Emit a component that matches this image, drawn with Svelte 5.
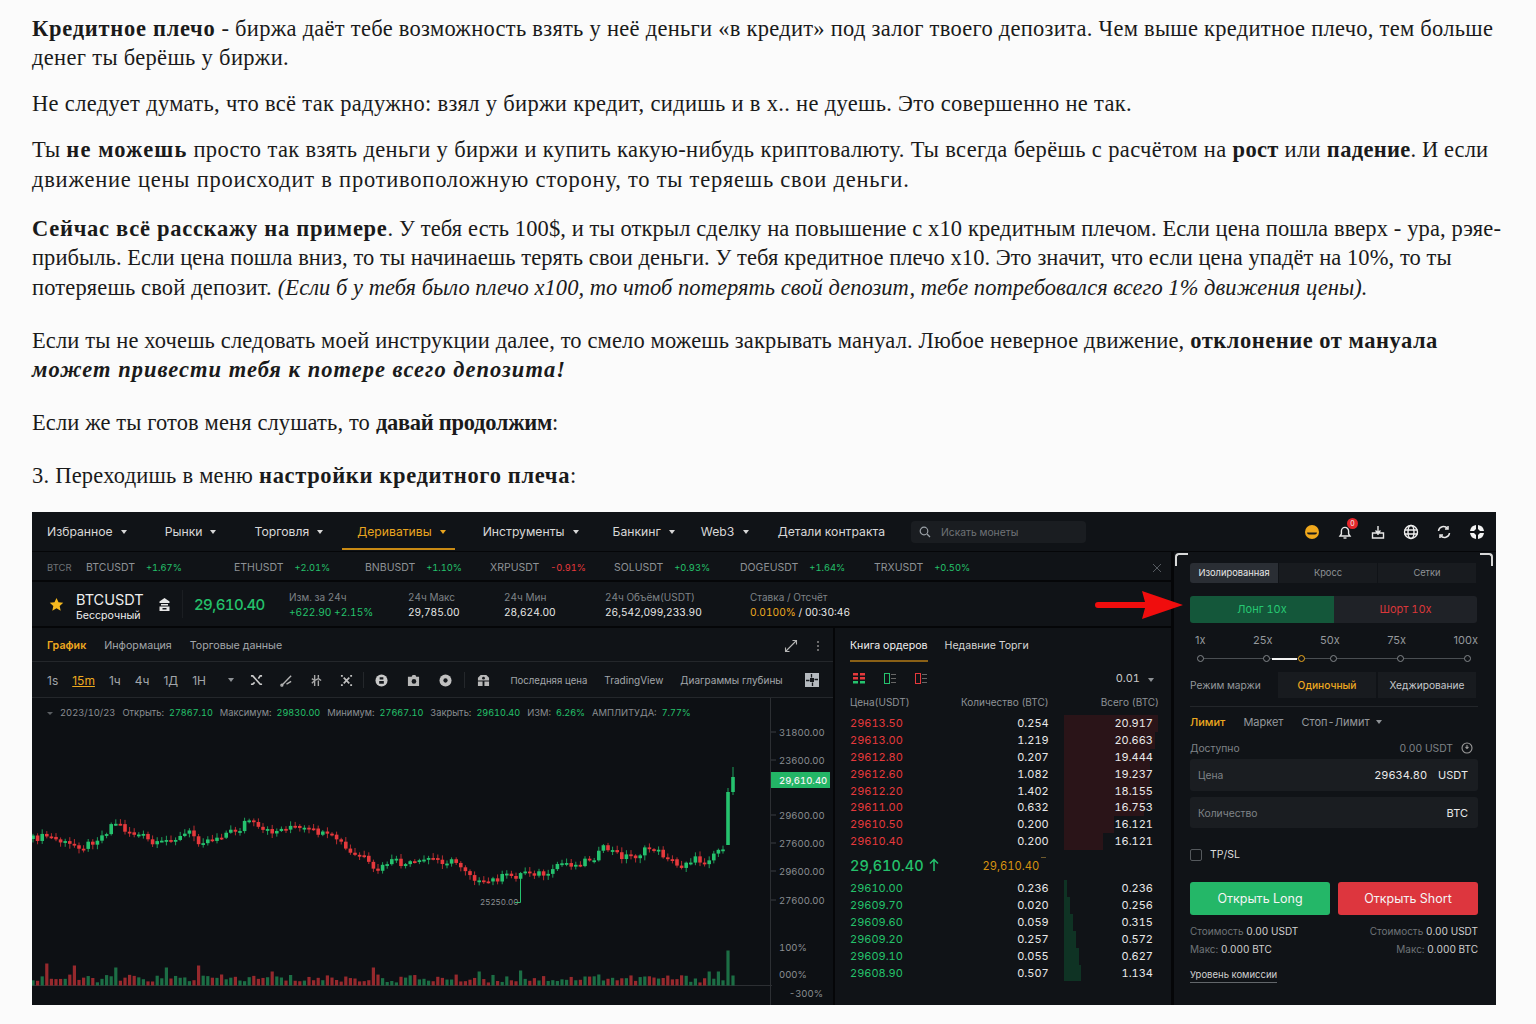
<script>
  const tickers = [
    ['BTCUSDT', '+1.67%'], ['ETHUSDT', '+2.01%'], ['BNBUSDT', '+1.10%'], ['XRPUSDT', '-0.91%'],
    ['SOLUSDT', '+0.93%'], ['DOGEUSDT', '+1.64%'], ['TRXUSDT', '+0.50%']
  ];
  const navItems = [
    ['Избранное', true], ['Рынки', true], ['Торговля', true], ['Деривативы', true],
    ['Инструменты', true], ['Банкинг', true], ['Web3', true], ['Детали контракта', false]
  ];
  const asks = [
    ['29613.50', '0.254', '20.917', 94], ['29613.00', '1.219', '20.663', 91], ['29612.80', '0.207', '19.444', 86],
    ['29612.60', '1.082', '19.237', 86], ['29612.20', '1.402', '18.155', 86], ['29611.00', '0.632', '16.753', 80],
    ['29610.50', '0.200', '16.121', 50], ['29610.40', '0.200', '16.121', 39]
  ];
  const bids = [
    ['29610.00', '0.236', '0.236', 3], ['29609.70', '0.020', '0.256', 6], ['29609.60', '0.059', '0.315', 9],
    ['29609.20', '0.257', '0.572', 12], ['29609.10', '0.055', '0.627', 15], ['29608.90', '0.507', '1.134', 17]
  ];

  // price path traced by hand: [x, y] in page pixels
  const path = [
    [33,840],[47,837],[69,846],[78,846],[83,848],[105,835],[110,826],[118,823],[123,830],[132,834],[145,838],
    [151,845],[156,846],[165,843],[170,838],[178,840],[188,833],[193,835],[197,842],[213,840],[223,835],[240,830],
    [247,820],[252,823],[257,830],[265,833],[275,832],[284,830],[288,826],[298,830],[317,833],[325,837],[338,840],
    [343,847],[348,853],[353,857],[362,856],[367,863],[371,870],[375,873],[383,868],[389,862],[397,863],[402,866],
    [420,864],[428,859],[442,862],[455,863],[463,868],[473,877],[482,887],[487,883],[505,877],[516,877],[521,875],
    [525,872],[543,875],[547,879],[552,875],[557,865],[570,864],[575,867],[583,862],[597,857],[602,850],[607,849],
    [620,857],[637,857],[642,853],[651,849],[656,850],[660,855],[668,858],[677,867],[682,867],[685,862],[697,860],
    [703,864],[707,861],[712,855],[720,850],[725,846]
  ];
  function priceAt(x) {
    for (let i = 1; i < path.length; i++) {
      if (x <= path[i][0]) {
        const [x0, y0] = path[i - 1];
        const [x1, y1] = path[i];
        return y0 + ((y1 - y0) * (x - x0)) / (x1 - x0);
      }
    }
    return path[path.length - 1][1];
  }
  function rnd(i) {
    const v = Math.sin(i * 12.9898) * 43758.5453;
    return v - Math.floor(v);
  }
  const volumeSpikes = { 3: 22, 9: 20, 18: 18, 29: 18, 36: 20, 52: 14, 74: 18, 97: 14, 106: 15, 123: 11, 133: 9, 147: 14, 149: 14 };
  const candles = [];
  let open = 840;
  for (let i = 0; i < 152; i++) {
    const x = 33 + i * 4.6;
    const close = priceAt(x) + (rnd(i) - 0.5) * 7;
    const top = Math.min(open, close);
    const bottom = Math.max(open, close);
    candles.push({
      x,
      top,
      h: Math.max(bottom - top, 1.8),
      wickTop: top - 1 - rnd(i + 300) * 4,
      wickBottom: bottom + 1 + rnd(i + 500) * 4,
      up: close < open,
      vol: volumeSpikes[i] ?? 3 + rnd(i + 900) * 8
    });
    open = close;
  }
  // last candles: the pump
  const lastCandles = [
    { x: 728, top: 793, h: 53, wickTop: 789, wickBottom: 846, up: true, vol: 35 },
    { x: 733, top: 778, h: 15, wickTop: 768, wickBottom: 796, up: true, vol: 10 }
  ];
  const allCandles = [...candles.filter((c) => c.x < 725), ...lastCandles];
  const axis = [[733, '31800.00'], [761, '23600.00'], [816, '29600.00'], [844, '27600.00'], [872, '29600.00'], [901, '27600.00']];
</script>

<main class="page">
  <article class="article">
    <p>
      <b class="b72">Кредитное плечо</b> <span class="sp27">- биржа даёт тебе возможность взять у неё деньги «в кредит» под залог твоего депозита. Чем выше кредитное плечо, тем больше</span><br />денег ты берёшь у биржи.
    </p>
    <p>Не следует думать, что всё так радужно: взял у биржи кредит, сидишь и в х.. не дуешь. Это совершенно не так.</p>
    <p>
      Ты <b class="b110">не можешь</b> <span class="sp37">просто так взять деньги у биржи и купить какую-нибудь криптовалюту. Ты всегда берёшь с расчётом на</span> <b>рост</b> или <b>падение</b><span class="sp07">. И если</span><br /><span class="sp77">движение цены происходит в противоположную сторону, то ты теряешь свои деньги.</span>
    </p>
    <p class="wide">
      <b class="b72">Сейчас всё расскажу на примере</b><span class="sp11">. У тебя есть 100$, и ты открыл сделку на повышение с х10 кредитным плечом. Если цена пошла вверх - ура, рэяе-</span><br /><span class="sp07">прибыль. Если цена пошла вниз, то ты начинаешь терять свои деньги. У тебя кредитное плечо х10. Это значит, что если цена упадёт на 10%, то ты</span><br /><span class="sp15">потеряешь свой депозит.</span> <i class="sp04">(Если б у тебя было плечо х100, то чтоб потерять свой депозит, тебе потребовался всего 1% движения цены).</i>
    </p>
    <p class="wider">
      <span class="sp13">Если ты не хочешь следовать моей инструкции далее, то смело можешь закрывать мануал. Любое неверное движение,</span> <b class="b52">отклонение от мануала</b><br /><b class="b102"><i>может привести тебя к потере всего депозита!</i></b>
    </p>
    <p class="wider"><span class="sp11">Если же ты готов меня слушать, то</span> <b class="bm28">давай продолжим</b>:</p>
    <p class="wider"><span class="sp22">3. Переходишь в меню</span> <b class="b65">настройки кредитного плеча</b>:</p>
  </article>

  <section class="panel">
    <nav class="nav">
      {#each navItems as [label, caret], i}
        <span class="nav-item" class:active={i === 3}>{label}{#if caret}<i class="caret"></i>{/if}</span>
      {/each}
      <div class="search">
        <svg width="12" height="12" viewBox="0 0 12 12" fill="none" stroke="#9aa0a6" stroke-width="1.2"><circle cx="5" cy="5" r="3.8" /><path d="M8 8l3 3" /></svg>
        <span>Искать монеты</span>
      </div>
      <div class="nav-icons">
        <svg width="16" height="16" viewBox="0 0 16 16"><circle cx="8" cy="8" r="7" fill="#f0a81c" /><path d="M3 8.500h10a2 2 0 0 1-2 2H5a2 2 0 0 1-2-2z" fill="#16181c" /></svg>
        <span class="bell">
          <svg width="16" height="16" viewBox="0 0 16 16" fill="none" stroke="#e8e8e8" stroke-width="1.4"><path d="M3 12h10l-1.4-2V7a3.6 3.6 0 0 0-7.2 0v3z" /><path d="M6.500 14h3" /></svg>
          <em>0</em>
        </span>
        <svg width="16" height="16" viewBox="0 0 16 16" fill="none" stroke="#e8e8e8" stroke-width="1.4"><path d="M2.500 9h11v5h-11zM8 2v9M5.500 6.500L8 9l2.500-2.500" /></svg>
        <svg width="16" height="16" viewBox="0 0 16 16" fill="none" stroke="#f0f0f0" stroke-width="1.4"><circle cx="8" cy="8" r="6.500" /><ellipse cx="8" cy="8" rx="3" ry="6.500" /><path d="M1.500 6h13M1.500 10h13" /></svg>
        <svg width="16" height="16" viewBox="0 0 16 16" fill="none" stroke="#e8e8e8" stroke-width="1.500"><path d="M2.500 7a5 5 0 0 1 9-2.500M13.500 9a5 5 0 0 1-9 2.500" /><path d="M9 5h3V2M7 11H4v3" /></svg>
        <svg width="16" height="16" viewBox="0 0 16 16" fill="#f2f2f2"><path d="M7 1v4L5 7H1a7 7 0 0 1 6-6zM9 1a7 7 0 0 1 6 6h-4L9 5zM1 9h4l2 2v4a7 7 0 0 1-6-6zM11 9h4a7 7 0 0 1-6 6v-4z" /></svg>
      </div>
    </nav>

    <div class="workspace">
      <div class="left">
        <div class="tickers">
          <span class="glitch">BTCR</span>
          {#each tickers as [sym, pct]}
            <span class="ticker">{sym}<b class={pct[0] === '-' ? 'red' : 'green'}>{pct}</b></span>
          {/each}
          <svg class="close" width="10" height="10" viewBox="0 0 10 10" stroke="#555a60" stroke-width="1"><path d="M1 1l8 8M9 1l-8 8" /></svg>
        </div>

        <div class="summary">
          <svg class="star" width="15" height="15" viewBox="0 0 24 24" fill="#f5b81f"><path d="M12 1.500l3.200 7 7.600.8-5.700 5.100 1.600 7.500L12 18.100l-6.700 3.800 1.600-7.500L1.200 9.300l7.600-.8z" /></svg>
          <div class="symbol"><strong>BTCUSDT</strong><span>Бессрочный</span></div>
          <svg class="symbol-icon" width="11" height="13" viewBox="0 0 11 13" fill="#e6e6e6"><path d="M5.500 0l5 3.500v1.500h-10V3.500z" /><path d="M2 6h7v1.500H2zM.5 8.500h10V13H.5z" /><path d="M3.500 10h4v1.500h-4z" fill="#101317" /></svg>
          <i class="summary-sep"></i>
          <div class="big-price">29,610.40</div>
          <div class="stat s1"><span>Изм. за 24ч</span><b class="green">+622.90 +2.15%</b></div>
          <div class="stat s2"><span>24ч Макс</span><b>29,785.00</b></div>
          <div class="stat s3"><span>24ч Мин</span><b>28,624.00</b></div>
          <div class="stat s4"><span>24ч Объём(USDT)</span><b>26,542,099,233.90</b></div>
          <div class="stat s5"><span>Ставка / Отсчёт</span><b><u>0.0100%</u> / 00:30:46</b></div>
        </div>

        <div class="lower">
          <div class="chart-col">
            <div class="chart-tabs">
              <span class="orange strong">График</span>
              <span>Информация</span>
              <span>Торговые данные</span>
              <svg class="expand" width="14" height="14" viewBox="0 0 14 14" fill="none" stroke="#b5b5b5" stroke-width="1.100"><path d="M1.500 12.500l11-11M8.500 1.500h4v4M1.500 8.500v4h4" /></svg>
              <svg width="4" height="12" viewBox="0 0 4 12" fill="#8a8a8a"><circle cx="2" cy="2" r="1" /><circle cx="2" cy="6" r="1" /><circle cx="2" cy="10" r="1" /></svg>
            </div>
            <div class="toolbar">
              <span class="tf">1s</span>
              <span class="tf current">15m</span>
              <span class="tf">1ч</span>
              <span class="tf">4ч</span>
              <span class="tf">1Д</span>
              <span class="tf">1Н</span>
              <i class="caret dim"></i>
              <svg class="tool first" viewBox="0 0 14 14" fill="none" stroke="#c8c8c8" stroke-width="1.800"><path d="M1 2h2l8 9h2M1 11h2l2-2M9 5l2-3h2" /></svg>
              <svg class="tool" viewBox="0 0 14 14" fill="none" stroke="#b5b5b5" stroke-width="1.500"><path d="M2 12L12 2M7 11l5-3" /><circle cx="2" cy="12" r="1" /></svg>
              <svg class="tool" viewBox="0 0 14 14" fill="none" stroke="#a8a8a8" stroke-width="1.500"><path d="M5 1v12M9 1v3M9 7v6M2 5l3 2 4-2 3 2M5 7l-3 3" /></svg>
              <svg class="tool" viewBox="0 0 14 14" fill="none" stroke="#c0c0c0" stroke-width="1.800"><path d="M4 4l6 6M10 4l-6 6" /><path d="M1 1h2v2H1zM11 1h2v2h-2zM1 11h2v2H1zM11 11h2v2h-2z" fill="#c0c0c0" stroke="none" /></svg>
              <i class="tool-sep s-a"></i>
              <svg class="tool g2" viewBox="0 0 14 14"><circle cx="7" cy="7" r="6.500" fill="#c8c8c8" /><path d="M5 3.500h4v2.500H5zM4.500 7.500h5v3h-5z" fill="#15181c" /></svg>
              <svg class="tool g2" viewBox="0 0 14 14"><path d="M1 3h4l1-2h3l1 2h3v10H1z" fill="#b8b8b8" /><circle cx="7.500" cy="8" r="2.500" fill="#15181c" /></svg>
              <svg class="tool g2" viewBox="0 0 14 14"><circle cx="7" cy="7" r="6.500" fill="#c0c0c0" /><circle cx="7" cy="7" r="2.300" fill="#15181c" /></svg>
              <i class="tool-sep s-b"></i>
              <svg class="tool g3" viewBox="0 0 14 14"><path d="M4 1h6l3 3v3H1V4z" fill="#b8b8b8" /><path d="M1 8h5v5H1zM8 8h5v5H8z" fill="#b8b8b8" /><circle cx="7" cy="4.500" r="1.500" fill="#15181c" /></svg>
              <span class="view v1">Последняя цена</span>
              <span class="view">TradingView</span>
              <span class="view">Диаграммы глубины</span>
              <svg class="layout" width="14" height="14" viewBox="0 0 14 14"><rect width="14" height="14" fill="#b5babf" /><path d="M6.500 1v3.500M7.500 13V9.500M1 7.500h3.500M13 6.500H9.500" stroke="#15181c" stroke-width="1.300" /><rect x="5" y="5" width="4" height="4" fill="#15181c" /></svg>
            </div>
            <div class="chart">
              <div class="legend">
                <i class="legend-caret"></i>
                <span>2023/10/23</span>
                <span>Открыть:<b>27867.10</b></span>
                <span>Максимум:<b>29830.00</b></span>
                <span>Минимум:<b>27667.10</b></span>
                <span>Закрыть:<b>29610.40</b></span>
                <span>ИЗМ:<b>6.26%</b></span>
                <span>АМПЛИТУДА:<b>7.77%</b></span>
              </div>
              <svg class="plot" viewBox="32 699 801 307" width="801" height="307">
                <path d="M770.500 699V1006M32 986.500H772" stroke="#2c2f33" fill="none" />
                {#each allCandles as c}
                  <path d="M{c.x} {c.wickTop}V{c.wickBottom}" stroke={c.up ? '#1f9e5a' : '#b82d30'} stroke-width="1" />
                  <rect x={c.x - 1.800} y={c.top} width="3.600" height={c.h} fill={c.up ? '#25c26e' : '#e5393c'} />
                  <rect x={c.x - 1.600} y={986.500 - c.vol} width="3.200" height={c.vol} fill={c.up ? '#1c6e45' : '#96292d'} />
                {/each}
                <path d="M520.500 875V903.500H515" stroke="#25c26e" fill="none" />
                <text x="480" y="906" class="low">25250.00</text>
                {#each axis as [y, label]}
                  <path d="M771 {y}h5" stroke="#3a3d42" />
                  <text x="779" y={y + 4} class="tick">{label}</text>
                {/each}
                <rect x="771" y="773" width="59" height="16" fill="#23b566" />
                <text x="779" y="785" class="tag">29,610.40</text>
                <text x="779" y="952" class="tick">100%</text>
                <text x="779" y="979" class="tick">000%</text>
                <text x="789" y="998" class="tick">-300%</text>
              </svg>
            </div>
          </div>

          <div class="book">
            <div class="book-tabs">
              <span class="book-active">Книга ордеров</span>
              <span>Недавние Торги</span>
            </div>
            <div class="book-tools">
              <svg width="12" height="11" viewBox="0 0 12 11"><path d="M0 0h5v2.500H0zM7 0h5v2.500H7z" fill="#e5393c" /><path d="M0 4h5v2.500H0zM7 4h5v2.500H7z" fill="#e5393c" /><path d="M0 8h5v2.500H0zM7 8h5v2.500H7z" fill="#25c26e" /></svg>
              <svg width="12" height="11" viewBox="0 0 12 11" fill="none"><rect x=".5" y=".5" width="5" height="10" stroke="#25c26e" /><path d="M7 1.500h5M7 5.500h5M7 9.500h5" stroke="#666" /></svg>
              <svg width="12" height="11" viewBox="0 0 12 11" fill="none"><rect x=".5" y=".5" width="5" height="10" stroke="#e5393c" /><path d="M7 1.500h5M7 5.500h5M7 9.500h5" stroke="#666" /></svg>
              <span class="precision">0.01<i class="caret dim"></i></span>
            </div>
            <div class="book-head"><span>Цена(USDT)</span><span>Количество (BTC)</span><span>Всего (BTC)</span></div>
            <div class="asks">
              {#each asks as [price, qty, total, bar]}
                <div class="book-row">
                  <i class="bar ask-bar" style="width:{bar}px"></i>
                  <span class="red">{price}</span><span>{qty}</span><span>{total}</span>
                </div>
              {/each}
            </div>
            <div class="mid">
              <span class="mid-price">29,610.40</span>
              <svg width="10" height="14" viewBox="0 0 10 14" fill="none" stroke="#25c26e" stroke-width="1.500"><path d="M5 13V1.500M1 5.500l4-4 4 4" /></svg>
              <span class="mark">29,610.40<sup></sup></span>
            </div>
            <div class="bids">
              {#each bids as [price, qty, total, bar]}
                <div class="book-row">
                  <i class="bar bid-bar" style="width:{bar}px"></i>
                  <span class="green">{price}</span><span>{qty}</span><span>{total}</span>
                </div>
              {/each}
            </div>
          </div>
        </div>
      </div>

      <aside class="form">
        <i class="corner tl"></i><i class="corner tr"></i>
        <div class="mode-tabs">
          <span class="on">Изолированная</span><span>Кросс</span><span>Сетки</span>
        </div>
        <div class="side">
          <span class="long">Лонг 10x</span><span class="short">Шорт 10x</span>
        </div>
        <div class="lev-labels"><span>1x</span><span>25x</span><span>50x</span><span>75x</span><span>100x</span></div>
        <div class="slider">
          <i class="fill"></i>
          <i class="dot" style="left:0"></i>
          <i class="dot" style="left:25%"></i>
          <i class="dot cur" style="left:38%"></i>
          <i class="dot" style="left:50%"></i>
          <i class="dot" style="left:75%"></i>
          <i class="dot" style="left:100%"></i>
        </div>
        <div class="margin-mode">
          <span class="mm-label">Режим маржи</span>
          <span class="mm-btn on">Одиночный</span>
          <span class="mm-btn">Хеджирование</span>
        </div>
        <div class="order-tabs">
          <span class="orange">Лимит</span><span>Маркет</span><span>Стоп-Лимит<i class="caret dim"></i></span>
        </div>
        <div class="avail">
          <span>Доступно</span>
          <span class="avail-val">0.00 USDT
            <svg width="12" height="12" viewBox="0 0 12 12" fill="none" stroke="#9a9a9a" stroke-width="1.100"><circle cx="6" cy="6" r="5" /><path d="M6 3v3.500M4.500 5L6 6.500 7.500 5" /></svg>
          </span>
        </div>
        <div class="field"><span>Цена</span><b>29634.80</b><b class="unit">USDT</b></div>
        <div class="field second"><span>Количество</span><b class="unit">BTC</b></div>
        <label class="tpsl"><i></i>TP/SL</label>
        <div class="open-btns">
          <span class="open-long">Открыть Long</span>
          <span class="open-short">Открыть Short</span>
        </div>
        <div class="costs">
          <span>Стоимость <b>0.00 USDT</b></span><span>Стоимость <b>0.00 USDT</b></span>
          <span>Макс: <b>0.000 BTC</b></span><span>Макс: <b>0.000 BTC</b></span>
        </div>
        <div class="fee">Уровень комиссии</div>
      </aside>
    </div>

    <svg class="arrow" width="92" height="32" viewBox="0 0 92 32"><path d="M3 13H50L47 2l41 14-41 14 3-11H3a3 3 0 0 1 0-6z" fill="#f00d0d" /></svg>
  </section>
</main>

<style>
  :global(body) {
    margin: 0;
    background: #fbfbfb;
  }
  .page {
    width: 1536px;
    height: 1024px;
    overflow: hidden;
    box-sizing: border-box;
    padding: 13.500px 40px 0 32px;
  }
  .article {
    font-family: "Liberation Serif", serif;
    font-size: 22.500px;
    letter-spacing: 0.32px;
    line-height: 29.500px;
    color: #1a1a1a;
    white-space: nowrap;
  }
  .article p {
    margin: 0 0 16.500px;
  }
  .article p.wide {
    margin-top: 19.500px;
  }
  .article p.wider {
    margin-top: 23.500px;
  }
  /* line by line tracking, the source font runs wider or tighter per line */
  .sp04 { letter-spacing: 0.04px; }
  .sp07 { letter-spacing: 0.07px; }
  .sp11 { letter-spacing: 0.11px; }
  .sp13 { letter-spacing: 0.13px; }
  .sp15 { letter-spacing: 0.15px; }
  .sp22 { letter-spacing: 0.22px; }
  .sp27 { letter-spacing: 0.27px; }
  .sp37 { letter-spacing: 0.37px; }
  .sp77 { letter-spacing: 0.77px; }
  .b52 { letter-spacing: 0.52px; }
  .b65 { letter-spacing: 0.65px; }
  .b72 { letter-spacing: 0.72px; }
  .b102 { letter-spacing: 1.02px; }
  .b110 { letter-spacing: 1.1px; }
  .bm28 { letter-spacing: -0.28px; }
  .panel {
    position: relative;
    width: 1464px;
    height: 493px;
    margin-top: 21.500px;
    background: #050608;
    font-family: Inter, "Noto Sans", sans-serif;
    font-variant-numeric: tabular-nums;
    font-size: 11px;
    color: #aeb2b6;
    display: flex;
    flex-direction: column;
  }
  .nav {
    height: 39px;
    flex: none;
    display: flex;
    align-items: stretch;
    background: #101317;
    font-size: 12.200px;
    color: #d8d8d8;
  }
  .nav-item {
    display: flex;
    align-items: center;
    padding: 3px 15px 0;
    margin: 0 8px 1px 0;
    white-space: nowrap;
    border-bottom: 2px solid transparent;
  }
  .nav-item:nth-child(3) {
    margin-right: 4px;
  }
  .nav-item.active {
    color: #e9a51f;
    border-bottom-color: #c98a14;
    padding-right: 9px;
    margin-right: 13px;
  }
  .nav-item:nth-child(5) {
    margin-right: 4px;
  }
  .nav-item:nth-child(6) {
    margin-right: -4px;
  }
  .nav-item:nth-child(7) {
    margin-right: -1px;
  }
  .nav-item:nth-child(8) {
    margin-right: 11px;
  }
  .caret {
    display: inline-block;
    width: 0;
    height: 0;
    margin-left: 8px;
    border-left: 3.500px solid transparent;
    border-right: 3.500px solid transparent;
    border-top: 4px solid currentColor;
  }
  .caret.dim {
    color: #8e9296;
  }
  .search {
    width: 175px;
    height: 22px;
    align-self: center;
    border-radius: 4px;
    background: #1a1d21;
    display: flex;
    align-items: center;
    gap: 10px;
    padding-left: 8px;
    box-sizing: border-box;
    font-size: 10.300px;
    color: #6f7377;
  }
  .nav-icons {
    margin-left: auto;
    display: flex;
    align-items: center;
    gap: 17px;
    padding-right: 11px;
  }
  .bell {
    position: relative;
    display: flex;
  }
  .bell em {
    position: absolute;
    top: -6px;
    right: -5px;
    width: 11px;
    height: 11px;
    border-radius: 50%;
    background: #e5262b;
    color: #f4f4f4;
    font: normal 7px/11px Inter, sans-serif;
    text-align: center;
  }
  .workspace {
    flex: 1;
    min-height: 0;
    display: flex;
    gap: 3px;
    margin-top: 1px;
  }
  .left {
    width: 1140px;
    display: flex;
    flex-direction: column;
    gap: 2px;
  }
  .tickers {
    height: 28px;
    flex: none;
    background: #101317;
    display: grid;
    grid-template-columns: 39px 148px 131px 125px 124px 126px 134px 1fr auto;
    align-items: center;
    padding: 3px 0 0 15px;
    color: #8e9296;
    font-size: 10.500px;
    white-space: nowrap;
    box-sizing: border-box;
  }
  .glitch {
    font-size: 9.500px;
    color: #6e7276;
  }
  .ticker b {
    font-weight: 400;
    margin-left: 11px;
    font-size: 9.300px;
  }
  .close {
    grid-column: 9;
    margin-right: 9px;
  }
  .green {
    color: #24c16b;
  }
  .red {
    color: #e5393c;
  }
  .orange {
    color: #eea91f;
  }
  .summary {
    height: 44px;
    flex: none;
    background: #101317;
    display: flex;
    align-items: center;
    padding-left: 17px;
    white-space: nowrap;
  }
  .symbol {
    display: flex;
    flex-direction: column;
    margin-left: 12px;
    padding-top: 3px;
    width: 83px;
    color: #eee;
    font-size: 10.600px;
    line-height: 13px;
  }
  .symbol strong {
    font-weight: 400;
    font-size: 14.500px;
    line-height: 19px;
  }
  .symbol-icon {
    margin-right: 12px;
  }
  .summary-sep {
    width: 1px;
    height: 28px;
    background: #1b1e22;
    margin-right: 11px;
  }
  .big-price {
    color: #24c16b;
    font-size: 15px;
    font-weight: 500;
    letter-spacing: -0.6px;
    width: 95px;
  }
  .stat {
    display: flex;
    flex-direction: column;
    gap: 2px;
    padding-top: 1px;
    font-size: 10.200px;
    line-height: 13px;
  }
  .stat span {
    color: #7f8387;
    font-size: 10px;
  }
  .stat b {
    font-weight: 400;
    color: #e8e8e8;
  }
  .stat b.green {
    color: #24c16b;
  }
  .stat u {
    text-decoration: none;
    color: #eea91f;
  }
  .s1 {
    width: 119px;
  }
  .s2 {
    width: 96px;
  }
  .s3 {
    width: 101px;
  }
  .s4 {
    width: 145px;
  }
  .lower {
    flex: 1;
    min-height: 0;
    display: flex;
    gap: 2px;
  }
  .chart-col {
    width: 801px;
    display: flex;
    flex-direction: column;
    background: #101317;
  }
  .chart-tabs {
    height: 31px;
    flex: none;
    display: flex;
    align-items: center;
    gap: 18px;
    padding: 2px 13px 0 15px;
    border-bottom: 1px solid #24272b;
    font-size: 10.700px;
    color: #a2a6aa;
  }
  .strong {
    font-weight: 600;
  }
  .expand {
    margin-left: auto;
  }
  .toolbar {
    height: 36px;
    flex: none;
    display: flex;
    align-items: center;
    padding: 1px 0 0 15px;
    box-sizing: border-box;
    border-bottom: 1px solid #24272b;
    font-size: 12px;
    font-variant-numeric: normal;
    color: #a2a6aa;
    white-space: nowrap;
  }
  .tf {
    margin-right: 14px;
  }
  .tf.current {
    color: #eea91f;
    text-decoration: underline;
  }
  .tool {
    width: 13px;
    height: 13px;
    margin-right: 17px;
    flex: none;
  }
  .tool.first {
    margin-left: 16px;
  }
  .tool.g2 {
    margin-right: 19px;
  }
  .tool.g3 {
    margin-right: 20px;
  }
  .tool-sep {
    width: 1px;
    height: 16px;
    background: #24272b;
  }
  .s-a {
    margin: 0 11px 0 -7px;
  }
  .s-b {
    margin: 0 12px 0 -6.500px;
  }
  .view {
    font-size: 10px;
    margin-right: 17px;
  }
  .view.v1 {
    font-size: 9.600px;
  }
  .layout {
    margin-left: 5px;
  }
  .chart {
    position: relative;
    flex: 1;
    min-height: 0;
    background: #0d1014;
  }
  .plot {
    display: block;
  }
  .plot text {
    font-family: Inter, sans-serif;
    font-size: 9.500px;
    font-variant-numeric: tabular-nums;
    fill: #8a8e92;
  }
  .plot text.low {
    font-size: 8px;
  }
  .plot text.tag {
    fill: #f2f2f2;
    font-size: 9.500px;
    font-weight: 500;
  }
  .legend {
    position: absolute;
    left: 15px;
    top: 8px;
    display: flex;
    align-items: center;
    gap: 7px;
    font-size: 9.400px;
    line-height: 14px;
    color: #8a8e92;
    white-space: nowrap;
  }
  .legend b {
    font-weight: 400;
    font-size: 9.100px;
    color: #24c16b;
    margin-left: 5px;
  }
  .legend-caret {
    width: 0;
    height: 0;
    border-left: 3px solid transparent;
    border-right: 3px solid transparent;
    border-top: 3px solid #5a5e62;
  }
  .book {
    flex: 1;
    background: #101317;
    padding: 0 14px 0 15px;
    display: flex;
    flex-direction: column;
    font-size: 11px;
  }
  .book-tabs {
    height: 34px;
    flex: none;
    display: flex;
    align-items: stretch;
    gap: 17px;
    font-size: 10.600px;
    color: #d5d5d5;
    box-sizing: border-box;
  }
  .book-tabs span {
    display: flex;
    align-items: center;
    white-space: nowrap;
  }
  .book-active {
    color: #f0f0f0;
    border-bottom: 2px solid #8a6016;
    box-sizing: border-box;
    padding-top: 3px;
  }
  .book-tools {
    height: 32px;
    flex: none;
    display: flex;
    align-items: center;
    gap: 19px;
    padding-left: 3px;
  }
  .precision {
    margin-left: auto;
    margin-right: 3px;
    color: #c8c8c8;
  }
  .book-head {
    display: grid;
    grid-template-columns: 1fr 1fr 1fr;
    height: 16px;
    line-height: 16px;
    font-size: 10px;
    color: #8e9296;
    white-space: nowrap;
  }
  .book-head span:nth-child(2) {
    text-align: right;
    margin-right: 6px;
  }
  .book-head span:nth-child(3) {
    text-align: right;
    margin-right: -2px;
  }
  .asks {
    margin-top: 5px;
  }
  .book-row {
    position: relative;
    display: grid;
    grid-template-columns: 1fr 1fr 1fr;
    height: 16.900px;
    line-height: 16.900px;
    color: #e8e8e8;
    font-size: 11px;
  }
  .book-row span {
    position: relative;
  }
  .book-row span:nth-child(3) {
    text-align: right;
    margin-right: 6px;
  }
  .book-row span:nth-child(4) {
    text-align: right;
    margin-right: 4px;
  }
  .bar {
    position: absolute;
    left: 214px;
    top: 0;
    bottom: 0;
  }
  .ask-bar {
    background: #2a1418;
  }
  .bid-bar {
    background: #0f3324;
  }
  .mid {
    height: 30px;
    display: flex;
    align-items: center;
    gap: 5px;
  }
  .mid-price {
    color: #24c16b;
    font-size: 14.500px;
    font-weight: 500;
  }
  .mark {
    color: #d6920f;
    font-size: 11.200px;
    margin-left: 39px;
  }
  .mark sup {
    display: inline-block;
    width: 5px;
    height: 1px;
    margin: 0 0 7px 2px;
    background: #6e5a2e;
  }
  .form {
    position: relative;
    flex: 1;
    background: #101317;
    padding: 11px 18px 0 16px;
    font-size: 11px;
    box-sizing: border-box;
  }
  .corner {
    position: absolute;
    top: 1px;
    width: 11px;
    height: 11px;
    border-top: 2px solid #d8d8d8;
  }
  .corner.tl {
    left: 1px;
    border-left: 2px solid #d8d8d8;
    border-top-left-radius: 4px;
  }
  .corner.tr {
    right: 3px;
    border-right: 2px solid #d8d8d8;
    border-top-right-radius: 4px;
  }
  .mode-tabs {
    display: grid;
    grid-template-columns: 89px 99px 99px;
    height: 20px;
    font-size: 9.300px;
    color: #8e9296;
    text-align: center;
    line-height: 20px;
  }
  .mode-tabs span {
    background: #181b1f;
    border-right: 1px solid #101317;
  }
  .mode-tabs .on {
    background: #2a2e34;
    color: #e6e6e6;
    border-radius: 3px 0 0 3px;
  }
  .side {
    display: grid;
    grid-template-columns: 144px 143px;
    margin-top: 13px;
    height: 27px;
    line-height: 27px;
    text-align: center;
    font-size: 11px;
  }
  .long {
    background: #14573a;
    color: #27c873;
    border-radius: 3px 0 0 3px;
  }
  .short {
    background: #1f2227;
    color: #d9373a;
    border-radius: 0 3px 3px 0;
  }
  .lev-labels {
    display: flex;
    justify-content: space-between;
    margin-top: 10px;
    line-height: 14px;
    font-size: 11px;
    font-variant-numeric: normal;
    padding-left: 5px;
    color: #94989c;
  }
  .slider {
    position: relative;
    margin: 11px 11px 0 10px;
    height: 1px;
    background: #4a4e52;
  }
  .fill {
    position: absolute;
    left: 27%;
    width: 9.500%;
    top: -0.500px;
    height: 2px;
    background: #f2f2f2;
  }
  .dot {
    position: absolute;
    top: -3px;
    width: 7px;
    height: 7px;
    margin-left: -3.500px;
    box-sizing: border-box;
    border-radius: 50%;
    border: 1.200px solid #83878b;
    background: #101317;
  }
  .dot.cur {
    border-color: #eea91f;
  }
  .margin-mode {
    display: flex;
    align-items: flex-start;
    margin-top: 13px;
    padding-bottom: 8px;
    border-bottom: 1px solid #23262a;
    height: 26px;
  }
  .mm-label {
    width: 88px;
    line-height: 26px;
    font-size: 10.200px;
    color: #94989c;
  }
  .mm-btn {
    width: 98px;
    height: 26px;
    line-height: 26px;
    text-align: center;
    background: #181b1f;
    color: #c4c8cc;
    font-size: 10.200px;
    margin-right: 2px;
  }
  .mm-btn.on {
    color: #eea91f;
    font-weight: 500;
  }
  .order-tabs {
    display: flex;
    gap: 18px;
    margin-top: 7px;
    line-height: 16px;
    font-size: 11px;
    color: #94989c;
  }
  .order-tabs .caret {
    margin-left: 6px;
    vertical-align: 2px;
  }
  .order-tabs .orange {
    font-weight: 500;
  }
  .avail {
    display: flex;
    justify-content: space-between;
    margin-top: 10px;
    line-height: 16px;
    font-size: 10.300px;
    color: #7f8387;
  }
  .avail-val {
    display: flex;
    align-items: center;
    gap: 8px;
    margin-right: 5px;
  }
  .field {
    display: flex;
    align-items: center;
    height: 32px;
    margin-top: 3px;
    padding: 0 10px 0 8px;
    background: #1a1d21;
    border-radius: 3px;
    color: #7f8387;
    font-size: 10.300px;
  }
  .field.second {
    margin-top: 6px;
    height: 31px;
  }
  .field span {
    flex: 1;
  }
  .field b {
    font-weight: 400;
    color: #e8e8e8;
    font-size: 11px;
  }
  .unit {
    margin-left: 11px;
  }
  .tpsl {
    display: flex;
    align-items: center;
    gap: 8px;
    margin-top: 20px;
    line-height: 14px;
    font-size: 10.500px;
    color: #dcdcdc;
  }
  .tpsl i {
    width: 10px;
    height: 10px;
    border: 1px solid #55595d;
    border-radius: 2px;
  }
  .open-btns {
    display: flex;
    justify-content: space-between;
    margin-top: 20px;
  }
  .open-btns span {
    width: 140px;
    height: 33px;
    line-height: 33px;
    text-align: center;
    border-radius: 3px;
    color: #f4f4f4;
    font-size: 12.500px;
  }
  .open-long {
    background: #24b768;
  }
  .open-short {
    background: #dd363e;
  }
  .costs {
    display: grid;
    grid-template-columns: 1fr 1fr;
    margin-top: 9px;
    row-gap: 3px;
    font-size: 10px;
    line-height: 15px;
    color: #6f7377;
  }
  .costs span:nth-child(even) {
    text-align: right;
  }
  .costs b {
    font-weight: 400;
    color: #d0d0d0;
  }
  .fee {
    display: inline-block;
    margin-top: 11px;
    font-size: 9.500px;
    line-height: 14px;
    color: #d0d0d0;
    border-bottom: 1px solid #62666a;
  }
  .arrow {
    position: absolute;
    left: 1063px;
    top: 77px;
  }
</style>
